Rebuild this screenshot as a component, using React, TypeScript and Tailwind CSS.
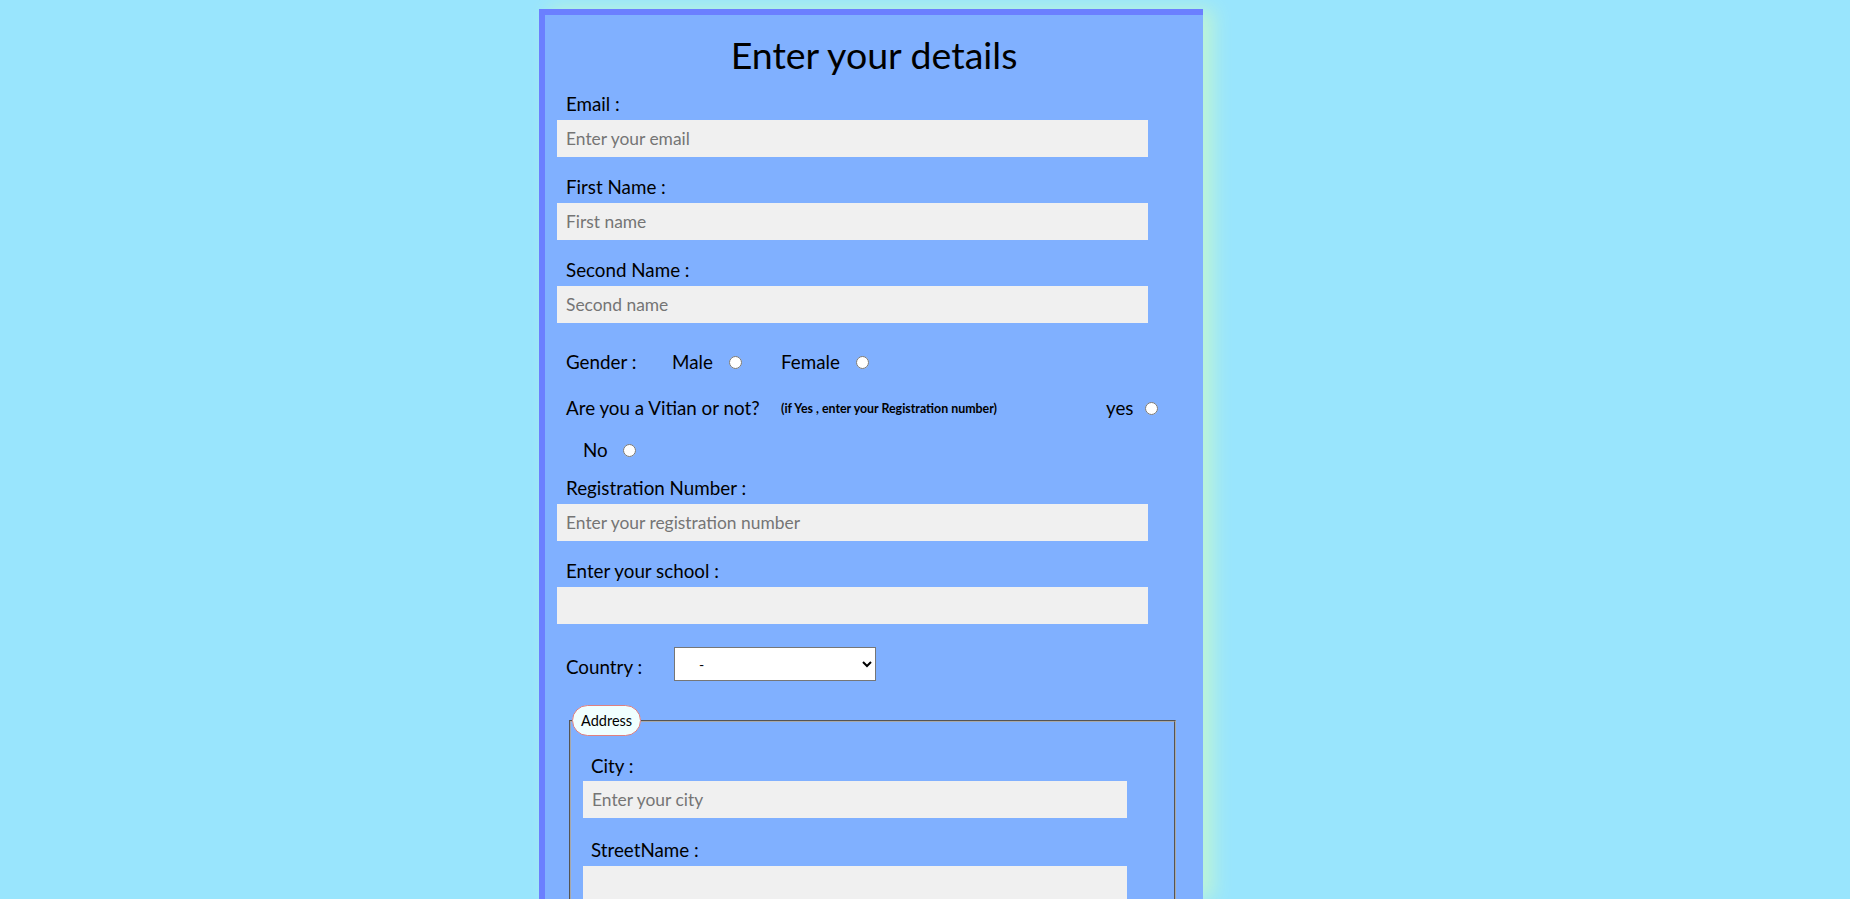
import React from "react";

const font = { fontFamily: "Lato, 'Open Sans', sans-serif" };

function Field({ label, placeholder }: { label: string; placeholder?: string }) {
  return (
    <div>
      <div className="pl-[21px] pt-[1px] text-[18.8px] leading-[21px] text-black">{label}</div>
      <input
        type="text"
        placeholder={placeholder}
        className="mt-[6px] ml-[12px] block h-[37px] w-[591px] bg-[#f0f0f0] pl-[9px] text-[17.4px] text-black outline-none placeholder:text-[#757575]"
      />
    </div>
  );
}

function Radio({ name }: { name: string }) {
  return (
    <input
      type="radio"
      name={name}
      className="m-0 h-[13px] w-[13px] shrink-0"
    />
  );
}

export default function App() {
  return (
    <div className="min-h-screen bg-[#99e5fd] pt-[9px]" style={font}>
      <div className="ml-[539px] h-[890px] w-[664px] overflow-hidden border-l-[6px] border-t-[6px] border-[#6b7fff] bg-[#80b0ff] shadow-[10px_0_18px_#bff5d5]">
        <h1 className="mt-[18px] text-center text-[37.5px] font-normal leading-[43px] text-black">
          Enter your details
        </h1>

        <div className="mt-[16px] flex flex-col gap-[18px]">
          <Field label="Email :" placeholder="Enter your email" />
          <Field label="First Name :" placeholder="First name" />
          <Field label="Second Name :" placeholder="Second name" />
        </div>

        <div className="mt-[28px] flex h-[22px] items-center pl-[21px] text-[18.8px] leading-[22px]">
          <span className="w-[106px] shrink-0">Gender :</span>
          <span className="w-[57px] shrink-0">Male</span>
          <Radio name="gender" />
          <span className="ml-[39px] w-[75px] shrink-0">Female</span>
          <Radio name="gender" />
        </div>

        <div className="mt-[24px] flex h-[22px] items-center pl-[21px] text-[18.8px] leading-[22px]">
          <span className="w-[215px] shrink-0">Are you a Vitian or not?</span>
          <span className="w-[325px] shrink-0 pt-[1px] text-[12.4px] font-bold">
            (if Yes , enter your Registration number)
          </span>
          <span className="w-[39px] shrink-0">yes</span>
          <Radio name="vitian" />
        </div>

        <div className="mt-[20px] flex h-[22px] items-center pl-[38px] text-[18.8px] leading-[22px]">
          <span className="w-[40px] shrink-0">No</span>
          <Radio name="vitian" />
        </div>

        <div className="mt-[15px] flex flex-col gap-[18px]">
          <Field label="Registration Number :" placeholder="Enter your registration number" />
          <Field label="Enter your school :" />
        </div>

        <div className="mt-[23px] flex h-[34px] items-start pl-[21px] text-[18.8px] leading-[22px]">
          <span className="mt-[9px] w-[108px] shrink-0">Country :</span>
          <select className="h-[34px] w-[202px] border border-[#767676] bg-white pl-[20px] text-[14px] text-black">
            <option>-</option>
            <option>India</option>
            <option>USA</option>
          </select>
        </div>

        <fieldset className="mt-[24px] ml-[24px] w-[607px] border-2 border-[#a8a8a8] p-0 [border-style:groove]">
          <legend className="ml-[1px] rounded-[16px] border border-[#e08080] bg-[#f0ffff] px-[8px] text-[14.5px] leading-[29px] text-black">
            Address
          </legend>
          <div className="mt-[18px] flex flex-col gap-[20px]">
            <div>
              <div className="pl-[20px] pt-[1px] text-[18.8px] leading-[21px] text-black">City :</div>
              <input
                type="text"
                placeholder="Enter your city"
                className="mt-[5px] ml-[12px] block h-[37px] w-[544px] bg-[#f0f0f0] pl-[9px] text-[17.4px] text-black outline-none placeholder:text-[#757575]"
              />
            </div>
            <div>
              <div className="pl-[20px] pt-[1px] text-[18.8px] leading-[21px] text-black">StreetName :</div>
              <input
                type="text"
                className="mt-[6px] ml-[12px] block h-[37px] w-[544px] bg-[#f0f0f0] pl-[9px] text-[17.4px] text-black outline-none"
              />
            </div>
          </div>
        </fieldset>
      </div>
    </div>
  );
}
